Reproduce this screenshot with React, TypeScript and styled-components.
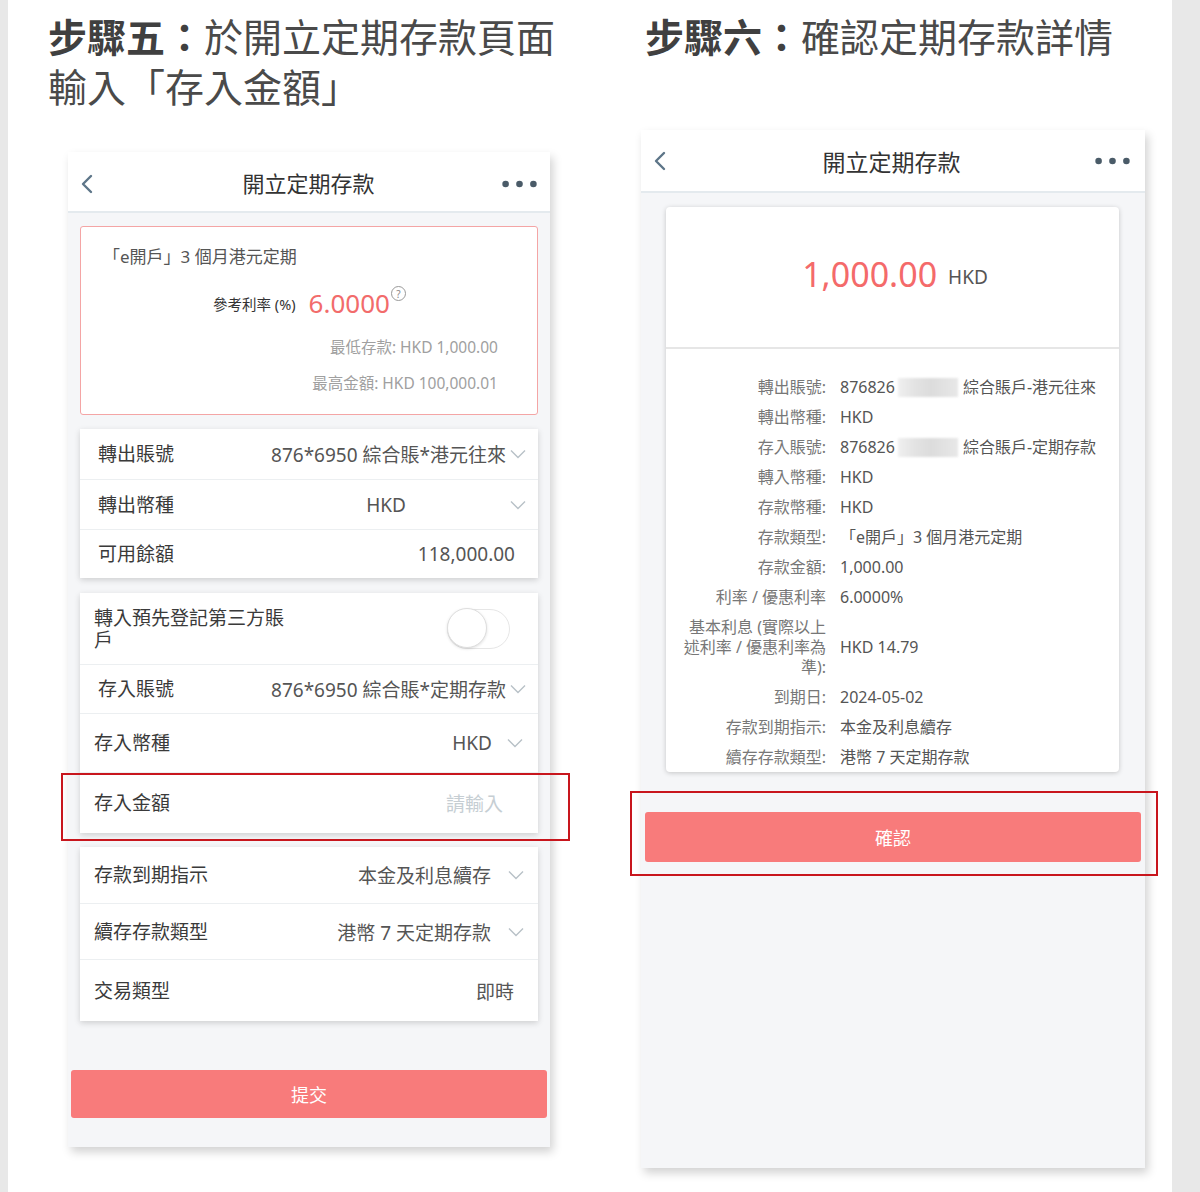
import React from 'react';
import styled, { createGlobalStyle } from 'styled-components';

const GlobalStyle = createGlobalStyle`
  html, body {
    margin: 0;
    padding: 0;
    background: #fff;
  }
  body {
    font-family: "Noto Sans", "Noto Sans CJK TC", sans-serif;
    color: #444;
  }
`;

const Page = styled.div`
  width: 1200px;
  height: 1192px;
  box-sizing: border-box;
  border-left: 8px solid #e8e8e8;
  border-right: 28px solid #e8e8e8;
  background: #fff;
  display: flex;
  overflow: hidden;
`;

const Column = styled.div<{ $width: number }>`
  width: ${p => p.$width}px;
  flex-shrink: 0;
  display: flex;
  flex-direction: column;
`;

const StepTitle = styled.h1<{ $inset: number }>`
  margin: 0;
  padding: 12px 0 0 ${p => p.$inset}px;
  font-size: 39px;
  line-height: 50px;
  font-weight: 400;
  color: #4a4a4a;
  white-space: nowrap;

  b {
    font-weight: 700;
    color: #404040;
  }
`;

const Phone = styled.div<{ $width: number; $height: number; $left: number; $top: number }>`
  width: ${p => p.$width}px;
  height: ${p => p.$height}px;
  margin: ${p => p.$top}px 0 0 ${p => p.$left}px;
  background: #f5f6f8;
  box-shadow: 3px 5px 9px rgba(0, 0, 0, 0.18);
  display: flex;
  flex-direction: column;
`;

const NavBar = styled.div<{ $height: number; $right: number; $drop: number }>`
  height: ${p => p.$height}px;
  flex-shrink: 0;
  box-sizing: border-box;
  background: #fff;
  border-bottom: 2px solid #e4eaee;
  display: flex;
  align-items: center;
  padding: 0 ${p => p.$right}px 0 12px;

  svg {
    margin-top: ${p => p.$drop}px;
  }
`;

const NavTitle = styled.div<{ $size: number }>`
  flex: 1;
  text-align: center;
  font-size: ${p => p.$size}px;
  color: #333;
  padding-left: 22px;
`;

const Body = styled.div<{ $pad: string }>`
  padding: ${p => p.$pad};
  display: flex;
  flex-direction: column;
`;

const InfoBox = styled.div`
  height: 189px;
  box-sizing: border-box;
  background: #fff;
  border: 1px solid #f4a5a5;
  border-radius: 3px;
  padding: 19px 39px 0 22px;
  display: flex;
  flex-direction: column;
`;

const InfoTitle = styled.div`
  font-size: 17px;
  line-height: 22px;
  color: #555;
`;

const RateLine = styled.div`
  margin-top: 20px;
  height: 30px;
  display: flex;
  align-items: center;
  justify-content: center;
  padding-left: 18px;
`;

const RateLabel = styled.span`
  font-size: 14.5px;
  color: #333;
  margin-right: 13px;
`;

const RateValue = styled.span`
  font-size: 26px;
  color: #f26b6b;
`;

const HelpMark = styled.span`
  display: inline-flex;
  align-items: center;
  justify-content: center;
  width: 13px;
  height: 13px;
  border: 1px solid #999;
  border-radius: 50%;
  font-size: 10px;
  line-height: 1;
  color: #888;
  align-self: flex-start;
  margin: -2px 0 0 1px;
`;

const LimitLine = styled.div<{ $top: number }>`
  margin-top: ${p => p.$top}px;
  font-size: 15.5px;
  line-height: 20px;
  color: #a0a0a0;
  text-align: right;
`;

const Card = styled.div<{ $top: number }>`
  margin-top: ${p => p.$top}px;
  background: #fff;
  box-shadow: 0 2px 6px rgba(0, 0, 0, 0.16);
  display: flex;
  flex-direction: column;
`;

const FormRow = styled.div<{ $h: number; $pl: number; $pr: number }>`
  position: relative;
  height: ${p => p.$h}px;
  box-sizing: border-box;
  padding: 0 ${p => p.$pr}px 0 ${p => p.$pl}px;
  display: flex;
  align-items: center;
  font-size: 19px;

  & + & {
    border-top: 1px solid #eceff1;
  }
`;

const FieldLabel = styled.div<{ $wrap?: boolean }>`
  color: #3a3a3a;
  line-height: 22px;
  max-width: ${p => (p.$wrap ? '200px' : 'none')};
  white-space: ${p => (p.$wrap ? 'normal' : 'nowrap')};
`;

const FieldValue = styled.div<{ $mr?: number; $muted?: boolean }>`
  margin-left: auto;
  margin-right: ${p => p.$mr ?? 0}px;
  color: ${p => (p.$muted ? '#c6ced3' : '#555')};
  white-space: nowrap;
`;

const Toggle = styled.div`
  margin-left: auto;
  width: 63px;
  height: 40px;
  box-sizing: border-box;
  border: 1.5px solid #e6e6e6;
  border-radius: 20px;
  position: relative;

  &::after {
    content: '';
    position: absolute;
    left: -1.5px;
    top: -1.5px;
    width: 40px;
    height: 40px;
    box-sizing: border-box;
    border-radius: 50%;
    border: 1px solid #dedede;
    background: #fff;
    box-shadow: 0 1px 3px rgba(0, 0, 0, 0.12);
  }
`;

const Highlight = styled.div<{ $t: number; $r: number; $b: number; $l: number }>`
  position: absolute;
  top: ${p => p.$t}px;
  right: ${p => p.$r}px;
  bottom: ${p => p.$b}px;
  left: ${p => p.$l}px;
  border: 2px solid #c8161d;
  pointer-events: none;
`;

const PrimaryButton = styled.button<{ $h: number; $margin: string }>`
  position: relative;
  height: ${p => p.$h}px;
  margin: ${p => p.$margin};
  border: none;
  border-radius: 3px;
  background: #f87b7b;
  color: #fff;
  font-family: inherit;
  font-size: 18px;
`;

const DetailCard = styled.div`
  background: #fff;
  border-radius: 4px;
  box-shadow: 0 1px 5px rgba(0, 0, 0, 0.2);
  height: 565px;
  box-sizing: border-box;
  overflow: hidden;
`;

const AmountArea = styled.div`
  height: 142px;
  box-sizing: border-box;
  border-bottom: 2px solid #e6e6e6;
  display: flex;
  align-items: center;
  justify-content: center;
  padding: 0 0 6px 5px;
`;

const Amount = styled.span`
  font-size: 34px;
  color: #f46a6a;
`;

const AmountUnit = styled.span`
  font-size: 19px;
  color: #555;
  margin: 6px 0 0 11px;
`;

const DetailList = styled.div`
  padding-top: 23px;
  display: flex;
  flex-direction: column;
`;

const DetailRow = styled.div`
  display: grid;
  grid-template-columns: 160px 1fr;
  column-gap: 14px;
  align-items: center;
  font-size: 16px;
  line-height: 20px;
  padding: 5px 0;
`;

const DetailLabel = styled.div`
  padding-left: 15px;
  text-align: right;
  color: #777;
  white-space: nowrap;
`;

const DetailValue = styled.div`
  color: #555;
  white-space: nowrap;
  display: flex;
  align-items: center;
`;

const Masked = styled.span`
  display: inline-block;
  width: 60px;
  height: 19px;
  margin: 0 5px 0 3px;
  background: linear-gradient(90deg, #f0f0f0 0%, #e4e4e4 25%, #dcdcdc 55%, #e8e8e8 100%);
  filter: blur(1.2px);
`;

const BackIcon = () => (
  <svg width="13" height="22" viewBox="0 0 13 22">
    <polyline points="11,3 3,11 11,19" fill="none" stroke="#5d7588" strokeWidth="2.4" strokeLinecap="round" strokeLinejoin="round" />
  </svg>
);

const MoreIcon = () => (
  <svg width="35" height="8" viewBox="0 0 35 8">
    <circle cx="3.6" cy="4" r="3.3" fill="#4a5b68" />
    <circle cx="17.5" cy="4" r="3.3" fill="#4a5b68" />
    <circle cx="31.4" cy="4" r="3.3" fill="#4a5b68" />
  </svg>
);

const Chevron = () => (
  <svg width="16" height="10" viewBox="0 0 16 10" style={{ marginLeft: 4, flexShrink: 0 }}>
    <polyline points="1,1.5 8,8.5 15,1.5" fill="none" stroke="#b8c1c7" strokeWidth="1.4" />
  </svg>
);

const details: { label: React.ReactNode; value: React.ReactNode }[] = [
  { label: '轉出賬號:', value: <>876826<Masked />綜合賬戶-港元往來</> },
  { label: '轉出幣種:', value: 'HKD' },
  { label: '存入賬號:', value: <>876826<Masked />綜合賬戶-定期存款</> },
  { label: '轉入幣種:', value: 'HKD' },
  { label: '存款幣種:', value: 'HKD' },
  { label: '存款類型:', value: '「e開戶」3 個月港元定期' },
  { label: '存款金額:', value: '1,000.00' },
  { label: '利率 / 優惠利率', value: '6.0000%' },
  { label: <>基本利息 (實際以上<br />述利率 / 優惠利率為<br />準):</>, value: 'HKD 14.79' },
  { label: '到期日:', value: '2024-05-02' },
  { label: '存款到期指示:', value: '本金及利息續存' },
  { label: '續存存款類型:', value: '港幣 7 天定期存款' },
];

const App: React.FC = () => {
  return (
    <>
      <GlobalStyle />
      <Page>
        <Column $width={592}>
          <StepTitle $inset={40}>
            <b>步驟五：</b>於開立定期存款頁面
            <br />
            輸入「存入金額」
          </StepTitle>

          <Phone $width={482} $height={995} $left={60} $top={40}>
            <NavBar $height={61} $right={13} $drop={4}>
              <BackIcon />
              <NavTitle $size={22}>開立定期存款</NavTitle>
              <MoreIcon />
            </NavBar>

            <Body $pad="13px 12px 0">
              <InfoBox>
                <InfoTitle>「e開戶」3 個月港元定期</InfoTitle>
                <RateLine>
                  <RateLabel>參考利率 (%)</RateLabel>
                  <RateValue>6.0000</RateValue>
                  <HelpMark>?</HelpMark>
                </RateLine>
                <LimitLine $top={19}>最低存款: HKD 1,000.00</LimitLine>
                <LimitLine $top={16}>最高金額: HKD 100,000.01</LimitLine>
              </InfoBox>

              <Card $top={14}>
                <FormRow $h={50} $pl={18} $pr={12}>
                  <FieldLabel>轉出賬號</FieldLabel>
                  <FieldValue>876*6950 綜合賬*港元往來</FieldValue>
                  <Chevron />
                </FormRow>
                <FormRow $h={50} $pl={18} $pr={12}>
                  <FieldLabel>轉出幣種</FieldLabel>
                  <FieldValue $mr={100}>HKD</FieldValue>
                  <Chevron />
                </FormRow>
                <FormRow $h={49} $pl={18} $pr={23}>
                  <FieldLabel>可用餘額</FieldLabel>
                  <FieldValue>118,000.00</FieldValue>
                </FormRow>
              </Card>

              <Card $top={15}>
                <FormRow $h={71} $pl={14} $pr={28}>
                  <FieldLabel $wrap>轉入預先登記第三方賬戶</FieldLabel>
                  <Toggle />
                </FormRow>
                <FormRow $h={49} $pl={18} $pr={12}>
                  <FieldLabel>存入賬號</FieldLabel>
                  <FieldValue>876*6950 綜合賬*定期存款</FieldValue>
                  <Chevron />
                </FormRow>
                <FormRow $h={59} $pl={14} $pr={15}>
                  <FieldLabel>存入幣種</FieldLabel>
                  <FieldValue $mr={11}>HKD</FieldValue>
                  <Chevron />
                </FormRow>
                <FormRow $h={61} $pl={14} $pr={35}>
                  <FieldLabel>存入金額</FieldLabel>
                  <FieldValue $muted>請輸入</FieldValue>
                  <Highlight $t={0} $r={-32} $b={-8} $l={-19} />
                </FormRow>
              </Card>

              <Card $top={14}>
                <FormRow $h={56} $pl={14} $pr={14}>
                  <FieldLabel>存款到期指示</FieldLabel>
                  <FieldValue $mr={13}>本金及利息續存</FieldValue>
                  <Chevron />
                </FormRow>
                <FormRow $h={56} $pl={14} $pr={14}>
                  <FieldLabel>續存存款類型</FieldLabel>
                  <FieldValue $mr={13}>港幣 7 天定期存款</FieldValue>
                  <Chevron />
                </FormRow>
                <FormRow $h={62} $pl={14} $pr={24}>
                  <FieldLabel>交易類型</FieldLabel>
                  <FieldValue>即時</FieldValue>
                </FormRow>
              </Card>

              <PrimaryButton $h={48} $margin="49px -9px 0">提交</PrimaryButton>
            </Body>
          </Phone>
        </Column>

        <Column $width={572}>
          <StepTitle $inset={45}>
            <b>步驟六：</b>確認定期存款詳情
          </StepTitle>

          <Phone $width={504} $height={1038} $left={41} $top={68}>
            <NavBar $height={63} $right={15} $drop={1}>
              <BackIcon />
              <NavTitle $size={23}>開立定期存款</NavTitle>
              <MoreIcon />
            </NavBar>

            <Body $pad="14px 26px 0 25px">
              <DetailCard>
                <AmountArea>
                  <Amount>1,000.00</Amount>
                  <AmountUnit>HKD</AmountUnit>
                </AmountArea>
                <DetailList>
                  {details.map((d, i) => (
                    <DetailRow key={i}>
                      <DetailLabel>{d.label}</DetailLabel>
                      <DetailValue>{d.value}</DetailValue>
                    </DetailRow>
                  ))}
                </DetailList>
              </DetailCard>

              <PrimaryButton $h={50} $margin="40px -22px 0 -21px">
                確認
                <Highlight $t={-21} $r={-17} $b={-14} $l={-15} />
              </PrimaryButton>
            </Body>
          </Phone>
        </Column>
      </Page>
    </>
  );
};

export default App;
